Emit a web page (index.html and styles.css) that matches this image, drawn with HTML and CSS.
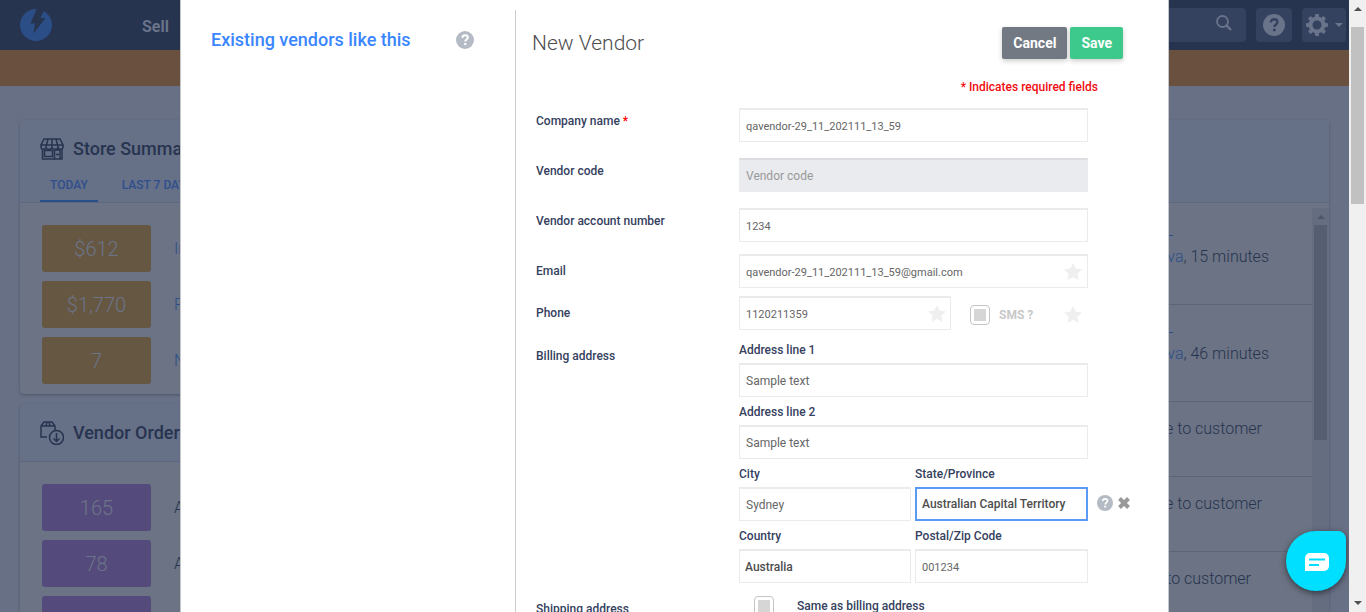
FILE: index.html
```html
<!DOCTYPE html>
<html lang="en">
<head>
<meta charset="utf-8">
<title>New Vendor</title>
<link rel="stylesheet" href="styles.css">
</head>
<body>
<svg class="defs" aria-hidden="true">
  <symbol id="star" viewBox="0 0 18 17"><path d="M9 0l2.700 5.600 6.300.8-4.600 4.300 1.200 6.300L9 14l-5.600 3 1.200-6.300L0 6.400l6.300-.8z"/></symbol>
  <symbol id="help" viewBox="0 0 18 18"><circle cx="9" cy="9" r="9"/><path d="M6.300 6.900c.2-1.700 1.300-2.600 2.800-2.600s2.700.9 2.700 2.300c0 2-2.500 2-2.500 4" fill="none" stroke="var(--mark)" stroke-width="1.900"/><rect x="8.200" y="12" width="2.100" height="2.100" fill="var(--mark)"/></symbol>
</svg>
<div class="view">
  <div class="app">
    <header class="topbar">
      <svg class="logo" viewBox="0 0 32 32"><circle cx="16" cy="16" r="16" fill="#2b4e87"/><path d="M17 -1L10.500 14.500h4.500L13.500 24.500 25.500 9h-5l4-9z" fill="#27344f"/></svg>
      <a class="nav-link" href="#">Sell</a>
      <div class="tools">
        <div class="search"><svg width="16" height="16" viewBox="0 0 16 16" fill="none" stroke="#69738a"><circle cx="6.500" cy="6.500" r="5.500" stroke-width="1.800"/><path d="M10.500 10.500l4.500 4.500" stroke-width="2.400"/></svg></div>
        <button class="tool" aria-label="Help"><svg class="tool-help" width="22" height="22"><use href="#help"/></svg></button>
        <button class="tool tool-gear" aria-label="Settings"><svg width="22" height="22" viewBox="-11 -11 22 22" fill="#69738a"><g><rect x="-2" y="-11" width="4" height="22" rx="1"/><rect x="-2" y="-11" width="4" height="22" rx="1" transform="rotate(45)"/><rect x="-2" y="-11" width="4" height="22" rx="1" transform="rotate(90)"/><rect x="-2" y="-11" width="4" height="22" rx="1" transform="rotate(135)"/><circle r="8.500"/></g><circle r="4.500" fill="#34415f"/></svg><svg width="8" height="4" viewBox="0 0 8 4" fill="#69738a"><path d="M0 0h8L4 4z"/></svg></button>
      </div>
    </header>
    <div class="banner"></div>
    <main class="dashboard">
      <div class="column">
        <section class="card">
          <div class="card-head card-head-tabs">
            <h2><svg width="24" height="22" viewBox="0 0 24 22" fill="none" stroke="#27344f" stroke-width="1.500"><path d="M4 1h16l3 6H1zM1 7v2c0 3 5 3 5 0 0 3 6 3 6 0 0 3 6 3 6 0 0 3 5 3 5 0V7M6 9l2-8M12 9V1M18 9l-2-8M2.500 11v10h19.500V11M4.500 12.500h8v6h-8zM14.500 21v-9h5.500v9M16 16.500h3"/></svg>Store Summary</h2>
            <nav class="tabs"><a class="active" href="#">TODAY</a><a href="#">LAST 7 DAYS</a></nav>
          </div>
          <div class="stats amber">
            <span class="tile">$612</span><a href="#">In</a>
            <span class="tile">$1,770</span><a href="#">P</a>
            <span class="tile">7</span><a href="#">N</a>
          </div>
        </section>
        <section class="card">
          <div class="card-head">
            <h2><svg width="24" height="24" viewBox="0 0 24 24" fill="none" stroke="#27344f" stroke-width="1.500"><path d="M7 16H1V5l3-4h8l3 4v4M1 5h14M6 5l1-4M10 5L9 1"/><circle cx="16.500" cy="16.500" r="7"/><path d="M16.500 12v8M13.500 17.500l3 3 3-3"/></svg>Vendor Orders</h2>
          </div>
          <div class="stats purple">
            <span class="tile">165</span><span>A</span>
            <span class="tile">78</span><span>A</span>
            <span class="tile"></span><span></span>
          </div>
        </section>
      </div>
      <section class="card activity">
        <div class="card-head card-head-tabs"></div>
        <div class="feed-wrap">
          <ul class="feed">
            <li class="tall"><a class="ref" href="#" aria-label="Order"></a><span><a href="#">ava</a>, 15 minutes</span></li>
            <li class="tall"><a class="ref" href="#" aria-label="Order"></a><span><a href="#">ava</a>, 46 minutes</span></li>
            <li>e to customer</li>
            <li>e to customer</li>
            <li>to customer</li>
          </ul>
          <div class="feed-bar"><svg width="8" height="4" viewBox="0 0 8 4" fill="#4c566a"><path d="M0 4h8L4 0z"/></svg><div class="feed-thumb"></div></div>
        </div>
      </section>
    </main>
  </div>

  <div class="overlay">
    <div class="modal" role="dialog" aria-label="New Vendor">
      <aside class="similar"><h3>Existing vendors like this</h3><svg class="hint" width="18" height="18"><use href="#help"/></svg></aside>
      <form class="editor">
        <div class="editor-head">
          <h1>New Vendor</h1>
          <div class="actions"><button type="button" class="btn cancel">Cancel</button><button type="button" class="btn save">Save</button></div>
        </div>
        <p class="required">* Indicates required fields</p>
        <div class="row"><label for="company">Company name <em>*</em></label><input class="field compact" id="company" value="qavendor-29_11_202111_13_59"></div>
        <div class="row"><label for="code">Vendor code</label><input class="field" id="code" placeholder="Vendor code" disabled></div>
        <div class="row row-close"><label for="account">Vendor account number</label><input class="field compact" id="account" value="1234"></div>
        <div class="row row-contact"><label for="email">Email</label><div class="starred"><input class="field compact" id="email" value="qavendor-29_11_202111_13_59@gmail.com"><svg class="star"><use href="#star"/></svg></div></div>
        <div class="row row-contact row-phone"><label for="phone">Phone</label>
          <div class="phone-line"><div class="starred phone"><input class="field compact" id="phone" value="1120211359"><svg class="star"><use href="#star"/></svg></div>
          <input type="checkbox" class="tick" id="sms" disabled><label class="sms" for="sms">SMS ?</label><svg class="star-free"><use href="#star"/></svg></div></div>
        <div class="row row-address"><span class="label">Billing address</span>
          <div class="address">
            <div class="part wide"><label for="line1">Address line 1</label><input class="field" id="line1" value="Sample text"></div>
            <div class="part wide"><label for="line2">Address line 2</label><input class="field" id="line2" value="Sample text"></div>
            <div class="part"><label for="city">City</label><input class="field" id="city" value="Sydney"></div>
            <div class="part with-tools"><label for="state">State/Province</label><select class="field focused" id="state"><option>Australian Capital Territory</option></select>
              <div class="field-tools"><svg class="hint" width="16" height="16"><use href="#help"/></svg><button type="button" aria-label="Clear"><svg width="12" height="12" viewBox="0 0 12 12" stroke="#999" stroke-width="4"><path d="M1.500 1.500l9 9M10.500 1.500l-9 9"/></svg></button></div></div>
            <div class="part"><label for="country">Country</label><select class="field" id="country"><option>Australia</option></select></div>
            <div class="part"><label for="zip">Postal/Zip Code</label><input class="field compact" id="zip" value="001234"></div>
          </div></div>
        <div class="row row-shipping"><span class="label">Shipping address</span><div class="same"><input type="checkbox" class="tick" id="same"><label for="same">Same as billing address</label></div></div>
      </form>
    </div>
  </div>
  <button class="chat" aria-label="Chat"><svg width="24" height="18" viewBox="0 0 24 18"><path d="M5 0h14a5 5 0 0 1 5 5v8a5 5 0 0 1-5 5H0V5a5 5 0 0 1 5-5z" fill="#fff"/><path d="M4 6.500h16M4 12h10" stroke="#00dfff" stroke-width="2"/></svg></button>
</div>
<div class="scrollbar"><svg width="8" height="4" viewBox="0 0 8 4" fill="#505050"><path d="M0 4h8L4 0z"/></svg><div class="thumb"></div><svg width="8" height="4" viewBox="0 0 8 4" fill="#505050"><path d="M0 0h8L4 4z"/></svg></div>
</body>
</html>
```

FILE: styles.css
```css
* { box-sizing: border-box; }
body { margin: 0; display: flex; height: 100vh; overflow: hidden; font-family: Roboto, "Liberation Sans", sans-serif; font-size: 12px; line-height: 18px; color: #35415e; }
h1, h2, h3, p, ul { margin: 0; padding: 0; }
a { text-decoration: none; color: inherit; }
button { font: inherit; border: 0; padding: 0; background: none; }
.defs { position: absolute; width: 0; height: 0; }
.view { flex: 1; min-width: 0; position: relative; overflow: hidden; background: #687085; }

/* dimmed dashboard */
.topbar { height: 50px; display: flex; align-items: center; padding: 0 3px 0 20px; background: #27344f; }
.logo { width: 32px; height: 32px; }
.nav-link { margin: 4px 0 0 90px; font-size: 16px; font-weight: 700; color: #69738a; }
.tools { margin-left: auto; display: flex; gap: 10px; }
.search { width: 240px; height: 34px; border-radius: 4px; background: #34415f; display: flex; align-items: center; justify-content: flex-end; padding: 0 14px 4px 0; }
.tool { width: 36px; height: 34px; border-radius: 4px; background: #34415f; display: flex; align-items: center; justify-content: center; gap: 7px; }
.tool-gear { width: 44px; }
.tool-help { fill: #69738a; --mark: #34415f; }
.banner { height: 36px; background: #69503f; }
.dashboard { display: grid; grid-template-columns: 1fr 1fr; gap: 20px; padding: 34px 20px 0; align-items: start; }
.column { display: grid; gap: 10px; }
.card { border-radius: 4px; background: #6b7384; box-shadow: 0 1px 3px #4c566a; }
.card-head { height: 58px; padding: 0 20px; border-bottom: 1px solid #5d6880; background: #667087; border-radius: 4px 4px 0 0; }
.card-head-tabs { height: 83px; }
h2 { display: flex; align-items: center; gap: 9px; height: 58px; font-size: 18px; font-weight: 500; color: #27344f; }
.tabs { display: flex; gap: 14px; color: #2f4f8d; font-weight: 500; }
.tabs a { height: 24px; padding: 0 10px; line-height: 14px; }
.tabs .active { border-bottom: 2px solid #2b4e87; }
.stats { display: grid; grid-template-columns: 109px 1fr; gap: 9px 23px; align-items: center; padding: 22px 22px 10px; font-size: 16px; font-weight: 300; color: #27344f; }
.stats a { color: #2b4e87; }
.tile { height: 47px; display: grid; place-items: center; border-radius: 3px; font-size: 20px; color: #6c7488; }
.amber .tile { background: #665743; }
.purple .tile { background: #544b7c; }
.activity { height: 600px; }
.feed-wrap { display: flex; margin-top: 5px; }
.feed { flex: 1; list-style: none; font-size: 16px; font-weight: 300; color: #27344f; }
.feed li { height: 75px; padding: 18px 50px 0 0; border-bottom: 1px solid #5d6577; text-align: right; }
.feed li.tall { height: 97px; padding-top: 6px; padding-right: 43px; }
.feed li:last-child { padding-right: 61px; border: 0; }
.feed a { color: #2b4e87; }
.feed .ref { display: block; width: 30px; height: 22px; margin: 0 96px 12px auto; border-bottom: 1px solid #2b4e87; }
.feed-bar { width: 17px; height: 500px; padding: 7px 2px; display: flex; flex-direction: column; align-items: center; gap: 6px; background: #656d80; }
.feed-thumb { width: 100%; height: 215px; background: #565f71; }

/* vendor editor */
.overlay { position: absolute; inset: 0; display: flex; justify-content: center; }
.modal { width: 989px; display: grid; grid-template-columns: 334px 1fr; background: #fff; border: solid #c4c6cb; border-width: 0 1px; overflow: hidden; }
.similar { display: flex; align-items: flex-start; justify-content: space-between; padding: 31px 41px 0 30px; }
h3 { font-size: 18px; font-weight: 500; color: #3a86ff; }
.hint { fill: #b5bbc5; --mark: #fff; flex: none; }
.editor { margin-top: 10px; border-left: 1px solid #ccc; padding-left: 20px; }
.editor-head { display: flex; justify-content: space-between; align-items: center; margin: 17px 45px 0 -4px; height: 32px; }
h1 { font-size: 21px; font-weight: 300; line-height: 24px; color: #4d4d4f; }
.actions { display: flex; gap: 3px; }
.btn { height: 32px; padding: 0 11px; border-radius: 2px; color: #fff; font-size: 14px; font-weight: 700; box-shadow: 0 2px 5px #0003; }
.cancel { background: #727983; }
.save { background: #3dc98c; }
.required { margin: 19px 70px 12px 0; text-align: right; font-weight: 500; color: #f00d12; }
.row { display: grid; grid-template-columns: 203px 349px; margin-bottom: 16px; align-items: start; font-weight: 500; }
.row > label, .label { padding-top: 4px; }
.row-close { margin-bottom: 12px; }
.row-contact { margin-bottom: 8px; }
.row-phone { margin-bottom: 11px; }
.row-contact > label { padding-top: 8px; }
.row-address { margin-bottom: 13px; }
.row-address > .label { padding-top: 6px; }
.row em { color: #f00; font-style: normal; }
.field { display: block; width: 100%; height: 34px; padding: 1px 6px 0; border: 1px solid #ebebeb; border-top-width: 2px; border-radius: 0; background: #fff; color: #666; font: 400 12px/18px Roboto, "Liberation Sans", sans-serif; outline: 0; }
.compact { font-size: 11px; }
.field:disabled { background: #e9ebef; border-top-color: #dcdde0; }
.field::placeholder { color: #999; opacity: 1; }
select.field { appearance: none; font-weight: 500; color: #4d4d4d; padding: 0 5px; }
select.focused { border: 2px solid #5b9af5; }
.starred { position: relative; }
.star, .star-free { width: 18px; height: 17px; fill: #efefef; }
.star { position: absolute; right: 6px; top: 9px; }
.phone-line { display: flex; align-items: center; }
.phone { width: 212px; }
.tick { appearance: none; width: 20px; height: 20px; flex: none; margin: 0; border: 1px solid #c4c4c4; border-radius: 4px; background: #d6d6d6 content-box; padding: 3px; }
.phone .star { right: 5px; }
.phone-line .tick { margin: 4px 9px 0 19px; }
.sms { margin-top: 4px; color: #c8c8c8; font-weight: 700; }
.star-free { margin: 2px 6px 0 auto; }
.address { display: grid; grid-template-columns: 172px 173px; gap: 6px 4px; }
.part { display: grid; gap: 4px; }
.wide { grid-column: span 2; }
.with-tools { position: relative; }
.field-tools { position: absolute; left: 100%; bottom: 10px; margin-left: 9px; display: flex; align-items: center; gap: 5px; }
.field-tools button { display: flex; }
.same { display: flex; align-items: center; gap: 23px; padding-left: 15px; }

.chat { position: absolute; right: 3px; bottom: 21px; width: 60px; height: 60px; border-radius: 50% 8px 50% 50%; background: #00dfff; display: grid; place-items: center; padding: 2px 0 0 2px; box-shadow: 0 2px 6px #0008; }
.scrollbar { width: 17px; padding: 7px 2px; display: flex; flex-direction: column; align-items: center; background: #f0f0f0; }
.thumb { width: 100%; height: 177px; margin: 16px 0 auto; background: #c1c1c1; }
```
